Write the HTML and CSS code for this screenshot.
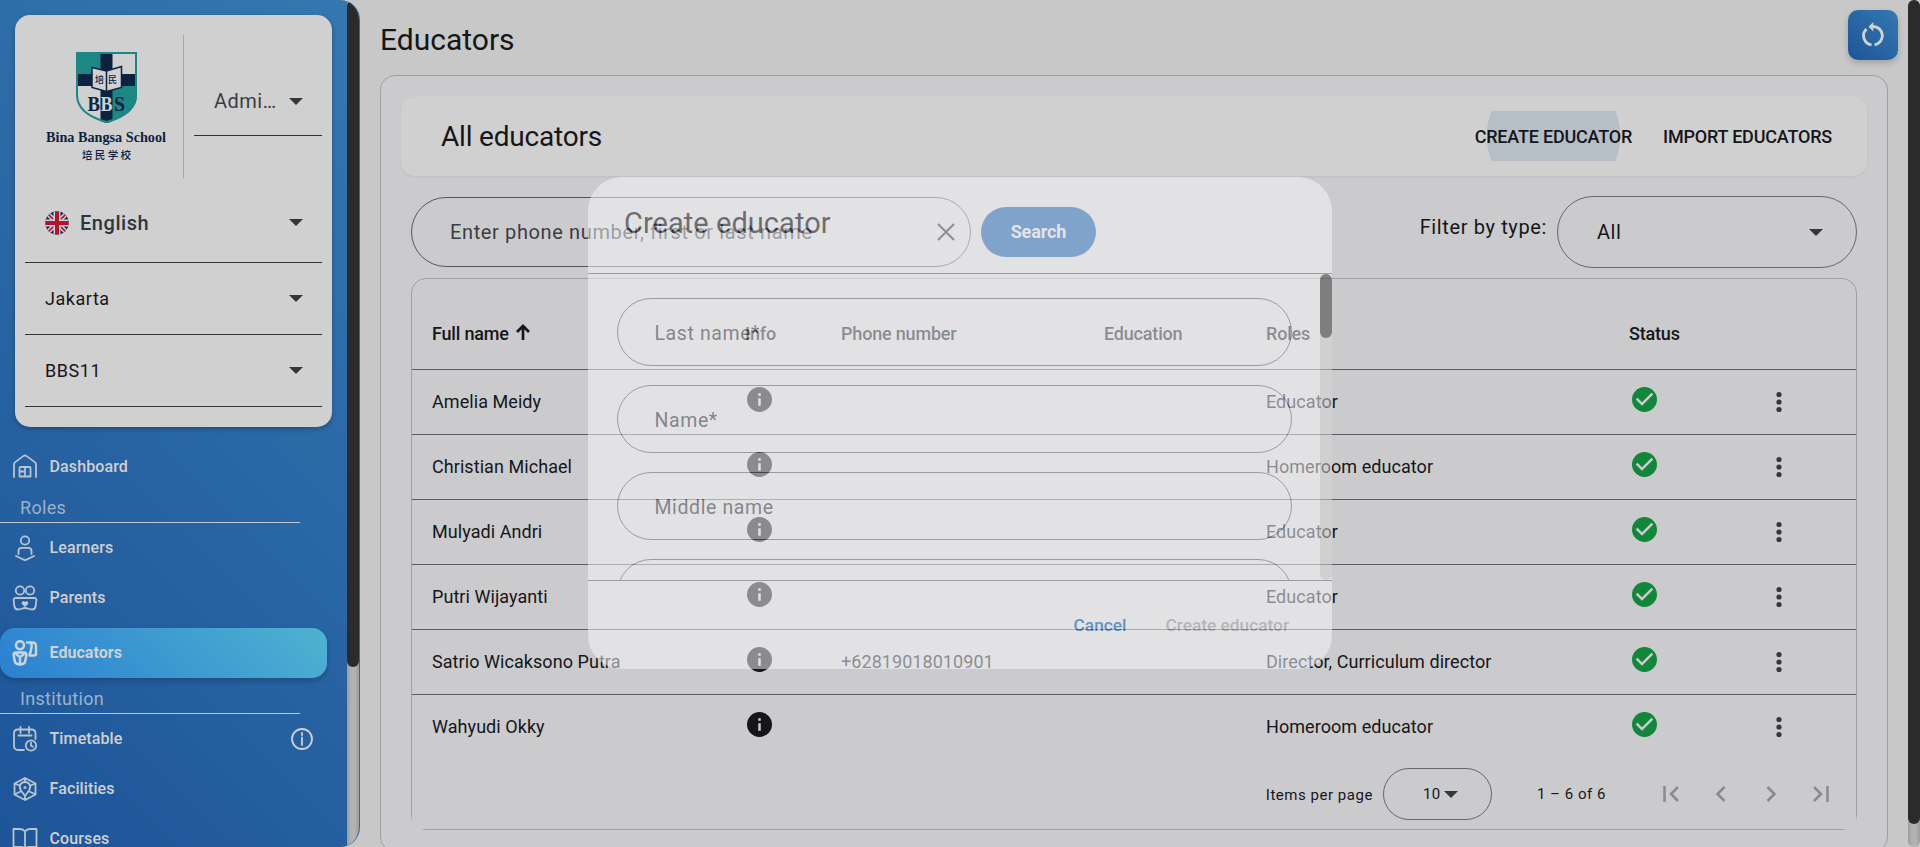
FILE: index.html
```
<!DOCTYPE html>
<html lang="en">
<head>
<meta charset="utf-8">
<title>Educators</title>
<link rel="stylesheet" href="styles.css">
</head>
<body>
<svg class="defs" width="0" height="0">
  <symbol id="caret" viewBox="0 0 14 7"><path d="M0 0h14L7 7z"/></symbol>
  <symbol id="info" viewBox="2 2 20 20"><path d="M12 2a10 10 0 1 0 0 20 10 10 0 0 0 0-20zm1 15h-2v-6h2zm0-8h-2V7h2z"/></symbol>
  <symbol id="check" viewBox="2 2 20 20"><path d="M12 2a10 10 0 1 0 0 20 10 10 0 0 0 0-20zm-2 15-5-5 1.4-1.4 3.6 3.6 7.6-7.6L19 8z"/></symbol>
  <symbol id="dots" viewBox="0 0 24 24"><circle cx="12" cy="4.500" r="2.600"/><circle cx="12" cy="12" r="2.600"/><circle cx="12" cy="19.500" r="2.600"/></symbol>
</svg>
<div class="app">
  <aside class="sidebar">
    <div class="side-body">
      <div class="card">
        <div class="card-top">
          <svg class="logo" width="138" height="143" viewBox="0 0 138 143">
            <clipPath id="sh"><path d="M31 17h61v43c0 16-16 24-30.500 28C47 84 31 76 31 60z"/></clipPath>
            <g clip-path="url(#sh)">
              <path fill="#cfd0d0" d="M31 17h61v72H31z"/>
              <path fill="#1c8784" d="M31 17h30v28H31zM62 45h30v44H62z"/>
              <path fill="#0c2340" d="M55.500 17h12v72h-12zM31 39h61v12H31z"/>
            </g>
            <path d="M32 18h59v42c0 15-15 23-29.500 27C47 83 32 75 32 60z" fill="none" stroke="#1c8784" stroke-width="2"/>
            <path d="M47 32.500 61.500 36l15-4.500v21l-15 4-14.500-4z" fill="#d0d0d0" stroke="#0c2340" stroke-width="1.500"/>
            <path d="M61.500 36v21" stroke="#0c2340" stroke-width="1.500"/>
            <text class="kai" x="50" y="48" font-size="9">培</text><text class="kai" x="63" y="48" font-size="9">民</text>
            <g class="serif" font-size="20"><text x="42.500" y="76" textLength="12.500" lengthAdjust="spacingAndGlyphs">B</text><text x="55.500" y="76" class="lite" textLength="12" lengthAdjust="spacingAndGlyphs">B</text><text x="69" y="76" textLength="11" lengthAdjust="spacingAndGlyphs">S</text></g>
            <text class="serif name" x="1" y="107" font-size="15" textLength="120" lengthAdjust="spacingAndGlyphs">Bina Bangsa School</text>
            <text class="kai" x="37" y="124" font-size="10.500" textLength="49">培民学校</text>
          </svg>
          <div class="role"><span>Admi…</span><svg class="caret"><use href="#caret"/></svg></div>
        </div>
        <div class="pick lang">
          <svg class="flag" width="24" height="24" viewBox="0 0 24 24">
            <clipPath id="fl"><circle cx="12" cy="12" r="11.700"/></clipPath>
            <g clip-path="url(#fl)"><path fill="#12296b" d="M0 0h24v24H0z"/><path stroke="#d0d0d0" stroke-width="4.500" d="m0 0 24 24M24 0 0 24"/><path stroke="#b0152c" stroke-width="1.600" d="m0 0 24 24M24 0 0 24"/><path stroke="#d0d0d0" stroke-width="7" d="M12 0v24M0 12h24"/><path stroke="#b0152c" stroke-width="4" d="M12 0v24M0 12h24"/></g>
          </svg>
          <b>English</b><svg class="caret"><use href="#caret"/></svg>
        </div>
        <div class="pick"><span>Jakarta</span><svg class="caret"><use href="#caret"/></svg></div>
        <div class="pick"><span>BBS11</span><svg class="caret"><use href="#caret"/></svg></div>
      </div>
      <nav>
        <a class="item first"><svg viewBox="0 0 26 26"><path d="M2 24V11.500c0-1 .4-1.800 1.200-2.400l8.400-6.200c.9-.6 1.900-.6 2.800 0l8.400 6.200c.8.600 1.200 1.400 1.200 2.400V24M7.500 23.500v-8.500c0-.6.400-1 1-1h9c.6 0 1 .4 1 1v8.500zM13 14v9.500M7.500 18.500H13"/></svg>Dashboard</a>
        <div class="group">Roles</div>
        <a class="item"><svg viewBox="0 0 26 26"><circle cx="13" cy="5.500" r="4.200"/><path d="M6.500 19v-3c0-2 1.200-3.200 3.200-3.200h6.600c2 0 3.200 1.200 3.200 3.200v3M4 21l9 4.300 9-4.300"/></svg>Learners</a>
        <a class="item"><svg viewBox="0 0 26 26"><circle cx="8" cy="5.500" r="4.200"/><circle cx="18" cy="5.500" r="4.200"/><path d="M3.500 13h19c1.200 0 2 .9 1.900 2l-.7 6c-.3 2-1.700 3.500-3.700 3.500-3 0-4-1.500-7-1.500s-4 1.500-7 1.500c-2 0-3.400-1.500-3.700-3.500l-.7-6c-.1-1.100.7-2 1.900-2z"/><path class="solid" d="M13 22l-3-3c-1.500-2 1.500-4 3-2 1.500-2 4.500 0 3 2z"/></svg>Parents</a>
        <a class="item on"><svg viewBox="0 0 26 26"><circle cx="8" cy="5.200" r="4"/><path d="M4 12.500h8c1.600 0 2.500 1 2.300 2.600l-1 6c-.4 2-1.600 3.400-5.300 3.400s-4.900-1.400-5.300-3.400l-1-6C1.500 13.500 2.400 12.500 4 12.500zM4.500 14.500 8 17l3.500-2.500M8 17v7M15 2.500h5.500c2 0 3.500 1.500 3.500 3.500v7.500c0 1.200-.8 2-2 2h-4.500M16 2.500c3 0 4 1.500 3.600 4-.3 3-.8 5-2.100 9"/></svg>Educators</a>
        <div class="group g2">Institution</div>
        <a class="item"><svg viewBox="0 0 26 26"><path d="M12 24H6c-2.400 0-4-1.600-4-4V7.500C2 5 3.600 3.500 6 3.500h13.500c2.400 0 4 1.500 4 4V13M8.500 1v6M17 1v6M6.500 9.500h13"/><circle cx="19" cy="19.500" r="5.200"/><path d="M19 16.500v3.200l2 1"/></svg>Timetable
          <svg class="hint" viewBox="0 0 22 22"><circle cx="11" cy="11" r="10"/><path d="M11 9.500v7.500M11 5v2"/></svg></a>
        <a class="item"><svg viewBox="0 0 26 26"><path d="M13 2l10.500 5.500v11L13 24 2.500 18.500v-11zM13 20l-4-5.500c-3-4.500 0-8.500 4-8.500s7 4 4 8.500zM2.500 7.500l5 2M23.500 7.500l-5 2M2.500 18.500l6-3M23.500 18.500l-6-3M13 20v4M13 2v4"/><circle cx="13" cy="11.500" r=".7"/></svg>Facilities</a>
        <a class="item"><svg viewBox="0 0 26 26"><path d="M13 5.500C11.500 3.500 10 3 8 3H1.500v18H9c2 0 3.300.6 4 2 .7-1.400 2-2 4-2h7.500V3H18c-2 0-3.500.5-5 2.500zM13 5.500V23"/></svg>Courses</a>
      </nav>
    </div>
    <div class="bar"><div class="thumb"></div></div>
  </aside>

  <main>
    <header class="title"><h1>Educators</h1>
      <div class="refresh"><svg width="24" height="26" viewBox="0 0 24 26"><path d="M5.500 7A9.200 9.200 0 0 0 10.500 22.800M13.500 22.800A9.200 9.200 0 0 0 12 4.500" fill="none" stroke="#d2d2d2" stroke-width="2.800"/><path d="M12.300 0v9.500L7.500 4.800z" fill="#d2d2d2"/></svg></div>
    </header>
    <section class="panel">
      <div class="head"><h2>All educators</h2>
        <button class="act ripple"><span>CREATE EDUCATOR</span></button>
        <button class="act"><span class="imp">IMPORT EDUCATORS</span></button>
      </div>
      <div class="filters">
        <div class="search"><span>Enter phone number, first or last name</span><svg width="18" height="18" viewBox="0 0 18 18"><path d="M1 1l16 16M17 1 1 17" stroke="#1d1e21" stroke-width="2"/></svg></div>
        <button class="go">Search</button>
        <label>Filter by type:</label>
        <div class="type"><span>All</span><svg class="caret"><use href="#caret"/></svg></div>
      </div>
      <div class="table">
        <div class="row th"><div>Full name<svg class="sort" width="14" height="16" viewBox="0 0 14 16"><path d="M7 16V2.500M1 8l6-6 6 6" fill="none" stroke="#15161a" stroke-width="2.700"/></svg></div><div class="inf">Info</div><div>Phone number</div><div>Education</div><div>Roles</div><div>Status</div><div></div></div>
        <div class="row"><div>Amelia Meidy</div><div><svg class="ic"><use href="#info"/></svg></div><div></div><div></div><div>Educator</div><div><svg class="ic ok"><use href="#check"/></svg></div><div><svg class="dots"><use href="#dots"/></svg></div></div>
        <div class="row"><div>Christian Michael</div><div><svg class="ic"><use href="#info"/></svg></div><div></div><div></div><div>Homeroom educator</div><div><svg class="ic ok"><use href="#check"/></svg></div><div><svg class="dots"><use href="#dots"/></svg></div></div>
        <div class="row"><div>Mulyadi Andri</div><div><svg class="ic"><use href="#info"/></svg></div><div></div><div></div><div>Educator</div><div><svg class="ic ok"><use href="#check"/></svg></div><div><svg class="dots"><use href="#dots"/></svg></div></div>
        <div class="row"><div>Putri Wijayanti</div><div><svg class="ic"><use href="#info"/></svg></div><div></div><div></div><div>Educator</div><div><svg class="ic ok"><use href="#check"/></svg></div><div><svg class="dots"><use href="#dots"/></svg></div></div>
        <div class="row"><div>Satrio Wicaksono Putra</div><div><svg class="ic"><use href="#info"/></svg></div><div>+62819018010901</div><div></div><div>Director, Curriculum director</div><div><svg class="ic ok"><use href="#check"/></svg></div><div><svg class="dots"><use href="#dots"/></svg></div></div>
        <div class="row last"><div>Wahyudi Okky</div><div><svg class="ic"><use href="#info"/></svg></div><div></div><div></div><div>Homeroom educator</div><div><svg class="ic ok"><use href="#check"/></svg></div><div><svg class="dots"><use href="#dots"/></svg></div></div>
        <div class="pager">
          <span class="ipp">Items per page</span>
          <div class="size"><span>10</span><svg class="caret"><use href="#caret"/></svg></div>
          <span class="range">1 – 6 of 6</span>
          <svg class="pg" viewBox="0 0 50 16"><path d="M18.500 0v16M32 1l-7 7 7 7"/></svg>
          <svg class="pg" viewBox="0 0 50 16"><path d="M28.500 1l-7 7 7 7"/></svg>
          <svg class="pg" viewBox="0 0 50 16"><path d="M21.500 1l7 7-7 7"/></svg>
          <svg class="pg" viewBox="0 0 50 16"><path d="M18 1l7 7-7 7M31.500 0v16"/></svg>
        </div>
      </div>
    </section>
  </main>
  <div class="bar page"><div class="thumb"></div></div>
</div>

<div class="dialog">
  <h3>Create educator</h3>
  <div class="content">
    <div class="fields">
      <div class="field">Last name*</div>
      <div class="field">Name*</div>
      <div class="field">Middle name</div>
      <div class="field"></div>
    </div>
    <div class="bar"><div class="thumb"></div></div>
  </div>
  <div class="actions"><span class="cancel">Cancel</span><span class="create">Create educator</span></div>
</div>
</body>
</html>
```
FILE: styles.css
```
* { box-sizing: border-box; }
body { margin: 0; height: 847px; overflow: hidden; background: #c8c8c8; font-family: Roboto, "Noto Sans CJK SC", sans-serif; color: #15161a; position: relative; }
h1, h2, h3 { margin: 0; font-weight: 400; }
button { border: 0; background: none; font: inherit; color: inherit; padding: 0; }
.defs { position: absolute; }
.app { display: flex; height: 847px; overflow: hidden; }
.caret { width: 14px; height: 7px; fill: #33373c; display: block; flex: none; }

.bar { width: 12px; height: 100%; background: linear-gradient(90deg, #9c9c9c, #b2b2b2 35%, #b2b2b2 65%, #9c9c9c); border-radius: 6px; flex: none; }
.thumb { background: #2b2b2b; border-radius: 6px; }

/* sidebar */
.sidebar { width: 360px; height: 847px; display: flex; overflow: hidden; flex: none; border-right: 1px solid #2c68a2; border-radius: 0 20px 20px 0; background: linear-gradient(45deg, #1d5598, #2966a5 50%, #3578b0); }
.sidebar .thumb { height: 667px; }
.sidebar .bar { border-radius: 0; }
.side-body { width: 347px; flex: none; height: 847px; overflow: hidden; }
.card { margin: 15px 0 0 15px; width: 317px; height: 412px; background: #d0d0d0; border-radius: 15px; box-shadow: 0 2px 5px rgba(0, 0, 0, .25); padding: 20px 10px 0; }
.card-top { display: flex; height: 143px; }
.logo { margin-left: 20px; border-right: 1px solid #a8a8a8; width: 139px; flex: none; }
.serif { font-family: "Liberation Serif", serif; font-weight: 700; fill: #0c2340; }
.lite { fill: #d0d0d0; }
.kai { font-family: "Noto Sans CJK SC", sans-serif; font-weight: 500; fill: #0c2340; }
.role { margin-left: 10px; width: 128px; height: 101px; border-bottom: 1px solid #33343b; display: flex; align-items: center; justify-content: space-between; padding: 32px 19px 0 20px; font-size: 20px; letter-spacing: .5px; color: #3b3c43; }
.pick { height: 72px; border-bottom: 1px solid #33343b; display: flex; align-items: center; padding: 0 19px 0 20px; font-size: 18px; letter-spacing: .55px; }
.pick .caret { margin-left: auto; }
.pick.lang { height: 85px; padding-top: 5px; font-size: 20px; color: #2e3540; letter-spacing: .55px; }
.pick b { font-weight: 500; margin-left: 11px; }

nav { padding-top: 14px; }
.item { height: 50px; display: flex; align-items: center; padding: 0 0 1px 12px; font-size: 16px; font-weight: 500; letter-spacing: .12px; color: #d0d0d0; }
.item.first { padding-bottom: 0; }
.item svg { width: 26px; height: 26px; margin-right: 11.500px; fill: none; stroke: #b8c4d0; stroke-width: 1.8; stroke-linecap: round; stroke-linejoin: round; flex: none; }
.item .solid { fill: #c3cbd3; stroke: none; }
.item .hint { width: 22px; height: 22px; margin: 0 34px 0 auto; stroke: #d0d0d0; }
.group { width: 300px; height: 32px; border-bottom: 1px solid #c3c6ca; padding: 5px 0 0 20px; font-size: 18px; line-height: 24px; letter-spacing: .3px; color: #9db1c9; }
.item.on { width: 327px; margin: 5px 0 0; border-radius: 15px; background: linear-gradient(45deg, #2c80d0, #4fb2d0); box-shadow: 0 3px 6px rgba(0, 0, 0, .2); font-weight: 700; letter-spacing: .05px; }
.item.on svg { stroke-width: 2.500; stroke: #c8d6dc; }
.group.g2 { height: 36px; padding-top: 9px; }

/* main column */
main { width: 1548px; padding-left: 20px; flex: none; }
.title { height: 75px; padding: 10px 10px 0 0; display: flex; justify-content: space-between; }
h1 { font-size: 30px; line-height: 59px; }
.refresh { width: 50px; height: 50px; border-radius: 10px; background: linear-gradient(45deg, #1d5598, #3578b0); display: flex; align-items: center; justify-content: center; box-shadow: 0 3px 6px rgba(0, 0, 0, .2); }
.panel { width: 1508px; height: 777px; border: 1px solid #9e9ea6; border-radius: 15px; background: #cbcbcd; padding: 20px; }
.head { height: 80px; border-radius: 15px; background: #d0d0d0; display: flex; align-items: center; padding: 0 35px 0 40px; box-shadow: 0 1px 3px rgba(0, 0, 0, .06); }
h2 { font-size: 28px; letter-spacing: -.2px; margin-right: auto; }
.act { height: 50px; font-size: 18px; font-weight: 500; letter-spacing: -.2px; white-space: nowrap; }
.ripple { margin-right: 31px; background: radial-gradient(circle 67px at 78.500px 25px, #b6bfc8 66.500px, transparent 67px); }
.filters { display: flex; padding: 20px 10px 0; height: 101px; }
.search { width: 560px; height: 70px; margin-top: 1px; border: 1px solid #55565c; border-radius: 35px; display: flex; align-items: center; justify-content: space-between; padding: 0 15px 0 38px; font-size: 20px; letter-spacing: .63px; color: #3b3c43; }
.go { width: 115px; height: 50px; border-radius: 25px; background: #004897; color: #d0d0d0; font-size: 18px; font-weight: 700; letter-spacing: -.1px; margin: 11px 0 0 10px; padding-bottom: 2px; }
label { margin: 19px 10px 0 auto; font-size: 20px; letter-spacing: .63px; }
.type { width: 300px; height: 72px; border: 1px solid #66676c; border-radius: 36px; display: flex; align-items: center; justify-content: space-between; padding: 0 33px 0 39px; font-size: 20px; letter-spacing: .5px; }
.table { margin: 1px 10px 0; border: 1px solid #9e9ea6; border-radius: 15px; height: 552px; }
.row { display: grid; grid-template-columns: 314px 95px 263px 162px 363px 138px 1fr; padding: 0 0 2px 20px; height: 65px; border-bottom: 1px solid #5c5c64; align-items: center; font-size: 18px; letter-spacing: .06px; white-space: nowrap; }
.th { height: 91px; padding-top: 20px; font-weight: 500; letter-spacing: -.18px; }
.inf { margin-left: -1px; }
.last { border-bottom: 0; }
.sort { margin-left: 7px; }
.ic { width: 25px; height: 25px; display: block; margin: -4px 0 0 .5px; fill: #15161a; }
.ok { fill: #12873c; margin-left: 2.500px; }
.dots { width: 24px; height: 24px; display: block; margin: 1px 0 0 -.5px; fill: #36373e; }
.pager { height: 69px; background: #cbcbcd; display: flex; align-items: center; justify-content: flex-end; padding: 0 10px 1px 0; font-size: 15px; letter-spacing: .53px; }
.ipp { padding-top: 1px; }
.size { margin: 0 45px 0 10px; width: 109px; height: 52px; border: 1px solid #66676c; border-radius: 26px; display: flex; align-items: center; padding-left: 39px; gap: 3px; }
.range { margin-right: 40px; }
.pg { width: 50px; height: 16px; fill: none; stroke: #8a8a8c; stroke-width: 2.500; }
.page .thumb { height: 824px; }

/* dialog fading in over the page */
.dialog { position: absolute; left: 588px; top: 177px; width: 744px; height: 492px; border-radius: 34px; background: #f8f8fd; opacity: .517; display: flex; flex-direction: column; overflow: hidden; }
h3 { height: 97px; padding: 26px 0 0 36px; font-size: 29px; line-height: 40px; letter-spacing: .05px; border-bottom: 1px solid #717178; }
.content { display: flex; height: 306px; overflow: hidden; justify-content: space-between; }
.fields { padding: 24px 0 0 29px; display: flex; flex-direction: column; gap: 19px; }
.field { width: 675px; height: 68px; flex: none; border: 1px solid #717178; border-radius: 34px; padding-left: 36.500px; line-height: 70px; font-size: 19.500px; letter-spacing: .6px; color: #44454c; }
.dialog .bar { background: #d6d6d4; }
.dialog .thumb { height: 64px; background: #3a3a3a; }
.actions { flex: 1; border-top: 1px solid #717178; display: flex; justify-content: flex-end; padding: 34px 43px 0 0; font-size: 17.300px; font-weight: 500; }
.cancel { color: #005fb5; margin-right: 39px; }
.create { color: #a2a2a6; }
```
